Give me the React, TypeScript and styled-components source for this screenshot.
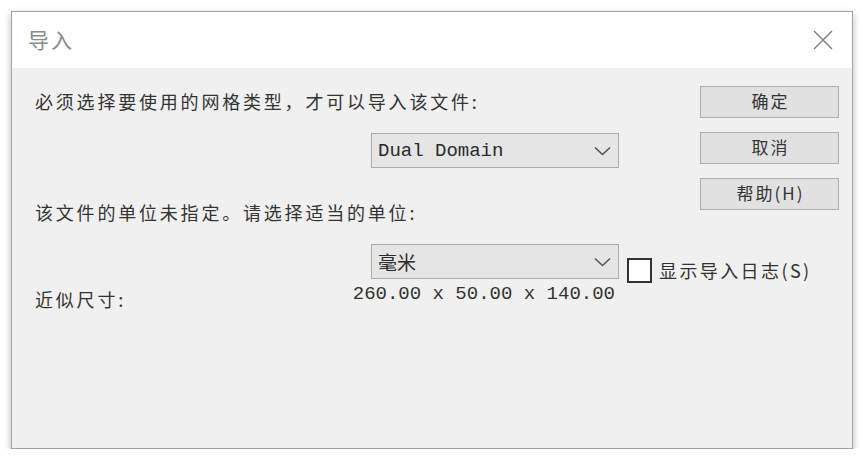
import React from "react";
import styled, { createGlobalStyle } from "styled-components";

const GlobalStyle = createGlobalStyle`
  html, body {
    margin: 0;
    padding: 0;
    background: #ffffff;
  }
  * {
    box-sizing: border-box;
  }
`;

const cjk = `"Noto Sans CJK SC", "Noto Sans", sans-serif`;
const mono = `"Liberation Mono", "Noto Sans CJK SC", monospace`;

const Page = styled.div`
  padding: 11px 0 0 11px;
`;

const Window = styled.div`
  width: 842px;
  height: 438px;
  border: 1px solid #a3a3a3;
  box-shadow: 0 3px 7px rgba(0, 0, 0, 0.28);
  background: #f0f0f0;
  display: flex;
  flex-direction: column;
  font-family: ${cjk};
  color: #333333;
`;

const TitleBar = styled.div`
  height: 56px;
  background: #ffffff;
  display: flex;
  align-items: center;
  justify-content: space-between;
  padding: 0 19px 0 16px;
`;

const Title = styled.div`
  font-size: 21px;
  letter-spacing: 2px;
  color: #8a8a8a;
  line-height: 24px;
  margin-top: -2px;
`;

const Body = styled.div`
  flex: 1;
  display: flex;
  padding: 0 13px 0 23px;
`;

const Content = styled.div`
  flex: 1;
  min-width: 0;
  display: flex;
  flex-direction: column;
`;

const Text = styled.div<{ top: number }>`
  margin-top: ${(p) => p.top}px;
  font-size: 18px;
  letter-spacing: 2.8px;
  line-height: 22px;
  white-space: nowrap;
`;

const Row = styled.div<{ top: number }>`
  margin-top: ${(p) => p.top}px;
  padding-left: 336px;
  display: flex;
  align-items: flex-start;
  white-space: nowrap;
`;

const Select = styled.div`
  flex-shrink: 0;
  width: 248px;
  height: 35px;
  border: 1px solid #adadad;
  background: #e5e5e5;
  display: flex;
  align-items: center;
  justify-content: space-between;
  padding: 0 7px 0 6px;
  font-family: ${mono};
  font-size: 19px;
  color: #2a2a2a;
`;

const CheckWrap = styled.label`
  flex-shrink: 0;
  display: flex;
  align-items: center;
  gap: 7px;
  margin: 13px 0 0 8px;
  font-size: 18px;
  letter-spacing: 2.4px;
`;

const Box = styled.span`
  width: 25px;
  height: 25px;
  border: 2px solid #333333;
  background: #ffffff;
`;

const SizeRow = styled.div`
  width: 584px;
  display: flex;
  justify-content: space-between;
  align-items: flex-start;
`;

const SizeLabel = styled.div`
  margin-top: 5px;
  font-size: 18px;
  letter-spacing: 2.8px;
  line-height: 22px;
`;

const SizeValue = styled.div`
  padding-right: 4px;
  font-family: ${mono};
  font-size: 19px;
  line-height: 22px;
  color: #333333;
`;

const Buttons = styled.div`
  flex-shrink: 0;
  width: 139px;
  padding-top: 18px;
  display: flex;
  flex-direction: column;
  gap: 14px;
`;

const Button = styled.button`
  height: 32px;
  border: 1px solid #adadad;
  background: #e1e1e1;
  font-family: ${cjk};
  font-size: 17px;
  letter-spacing: 2px;
  color: #333333;
  padding: 0 0 3px 2px;
  white-space: nowrap;
`;

const Chevron = () => (
  <svg width="17" height="10" viewBox="0 0 17 10">
    <path d="M1 1.5 L8.5 8.5 L16 1.5" fill="none" stroke="#555" strokeWidth="1.6" />
  </svg>
);

const CloseIcon = () => (
  <svg width="20" height="20" viewBox="0 0 20 20">
    <path d="M1 1 L19 19 M19 1 L1 19" stroke="#777" strokeWidth="1.3" />
  </svg>
);

export default function App() {
  return (
    <>
      <GlobalStyle />
      <Page>
        <Window>
          <TitleBar>
            <Title>导入</Title>
            <CloseIcon />
          </TitleBar>
          <Body>
            <Content>
              <Text top={22}>必须选择要使用的网格类型，才可以导入该文件:</Text>
              <Row top={21}>
                <Select>
                  <span>Dual Domain</span>
                  <Chevron />
                </Select>
              </Row>
              <Text top={33}>该文件的单位未指定。请选择适当的单位:</Text>
              <Row top={21}>
                <Select>
                  <span>毫米</span>
                  <Chevron />
                </Select>
                <CheckWrap>
                  <Box />
                  显示导入日志(S)
                </CheckWrap>
              </Row>
              <SizeRow>
                <SizeLabel>近似尺寸:</SizeLabel>
                <SizeValue>260.00 x 50.00 x 140.00</SizeValue>
              </SizeRow>
            </Content>
            <Buttons>
              <Button>确定</Button>
              <Button>取消</Button>
              <Button>帮助(H)</Button>
            </Buttons>
          </Body>
        </Window>
      </Page>
    </>
  );
}
